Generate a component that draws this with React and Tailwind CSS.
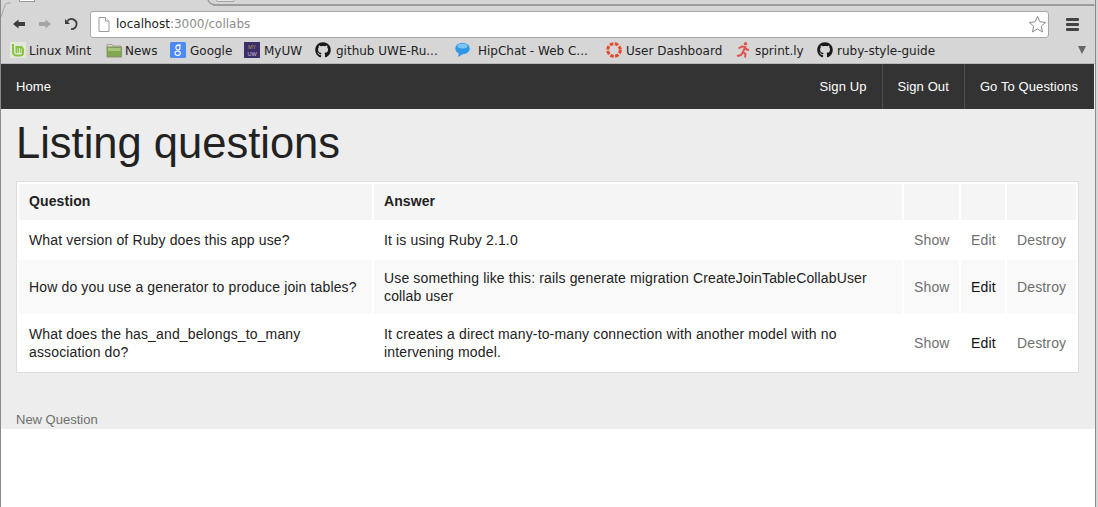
import React from "react";
import { FaGithub } from "react-icons/fa";

const sans = "font-['Liberation_Sans',Arial,sans-serif]";

function Mint() {
  return (
    <svg width="16" height="16" viewBox="0 0 16 16">
      <rect width="16" height="16" fill="#e3e8dc" />
      <path d="M3 2v8a3.500 3.500 0 0 0 3.500 3.500h4A2.500 2.500 0 0 0 13 11V7.500A2.500 2.500 0 0 0 10.500 5H6.500v6" fill="none" stroke="#86c440" strokeWidth="2" />
      <path d="M8.500 5.500v5M10.800 6v5" stroke="#86c440" strokeWidth="1.200" />
    </svg>
  );
}
function Folder() {
  return (
    <svg width="16" height="16" viewBox="0 0 16 16">
      <path d="M1 2.500h5l1 1.500h7.500v2H1z" fill="#d8d8cc" stroke="#8a8a78" strokeWidth="0.700" />
      <rect x="1" y="5" width="14.500" height="10" fill="#83a94e" stroke="#7d8a68" strokeWidth="0.800" />
      <rect x="2" y="6" width="12.500" height="3" fill="#a9c67e" />
    </svg>
  );
}
function GoogleIcon() {
  return (
    <svg width="16" height="16" viewBox="0 0 16 16">
      <rect width="16" height="16" rx="1.500" fill="#4c8bf5" />
      <ellipse cx="8" cy="5.500" rx="2.100" ry="2.400" fill="none" stroke="#fff" strokeWidth="1.100" />
      <ellipse cx="7.700" cy="11.200" rx="2.600" ry="2.200" fill="none" stroke="#fff" strokeWidth="1.100" />
      <path d="M8 3h3" stroke="#fff" strokeWidth="1" />
    </svg>
  );
}
function UW() {
  return (
    <svg width="16" height="16" viewBox="0 0 16 16">
      <rect width="16" height="16" fill="#3d2d69" />
      <text x="8" y="6.500" textAnchor="middle" fontSize="5.500" fill="#b09a5c" fontFamily="Liberation Sans">MY</text>
      <text x="8" y="13.500" textAnchor="middle" fontSize="5.500" fill="#c9c3d9" fontFamily="Liberation Sans">UW</text>
    </svg>
  );
}
function Hip() {
  return (
    <svg width="17" height="16" viewBox="0 0 17 16">
      <ellipse cx="9.500" cy="7.500" rx="7.500" ry="5.800" fill="#cfd4d8" />
      <path d="M12 11l4 4-1-5z" fill="#cfd4d8" />
      <ellipse cx="7.500" cy="6.500" rx="7.200" ry="5.800" fill="#2f97e8" />
      <path d="M4 10l-1 5 5-3z" fill="#2f97e8" />
      <ellipse cx="7.500" cy="4" rx="5" ry="2.500" fill="#7cc4f5" />
    </svg>
  );
}
function Dash() {
  return (
    <svg width="16" height="16" viewBox="0 0 16 16">
      <circle cx="8" cy="8" r="6.300" fill="none" stroke="#e8492c" strokeWidth="3" strokeDasharray="3.500 1.450" />
    </svg>
  );
}
function Runner() {
  return (
    <svg width="14" height="16" viewBox="0 0 14 16" fill="none" stroke="#e0534f" strokeWidth="2">
      <circle cx="9.500" cy="1.800" r="1.700" fill="#e0534f" stroke="none" />
      <path d="M2.500 6.500l3.500-2 3 .5-2 5 2.500 2-.5 3.500M7 10l-2 3-4 1M9 5l1.500 2.500 2.500.5" />
    </svg>
  );
}

const bookmarks = [
  { icon: <Mint />, label: "Linux Mint", w: "w-[96px]", pl: "pl-[19px]" },
  { icon: <Folder />, label: "News", w: "w-[64px]", pl: "pl-[19px]" },
  { icon: <GoogleIcon />, label: "Google", w: "w-[74px]", pl: "pl-[20px]" },
  { icon: <UW />, label: "MyUW", w: "w-[71px]", pl: "pl-[20px]" },
  { icon: <FaGithub size={16} color="#1a1a1a" />, label: "github UWE-Ru...", w: "w-[140px]", pl: "pl-[21px]" },
  { icon: <Hip />, label: "HipChat - Web C...", w: "w-[151px]", pl: "pl-[23px]" },
  { icon: <Dash />, label: "User Dashboard", w: "w-[130px]", pl: "pl-[20px]" },
  { icon: <Runner />, label: "sprint.ly", w: "w-[81px]", pl: "pl-[19px]" },
  { icon: <FaGithub size={16} color="#1a1a1a" />, label: "ruby-style-guide", w: "w-[130px]", pl: "pl-[20px]" },
];

function Bookmark({ b }) {
  return (
    <div className={`relative shrink-0 flex items-center h-[24px] ${b.w} ${b.pl}`}>
      <span className="absolute left-0 top-[4px] flex">{b.icon}</span>
      <span className="pt-[1px] text-[12px] leading-[16px] text-[#222] whitespace-nowrap">{b.label}</span>
    </div>
  );
}

function Chrome() {
  return (
    <div className="relative bg-[#d6d6d6] h-[64px] border-b border-[#b9b9b9] font-['DejaVu_Sans',sans-serif] flex flex-col">
      <svg width="240" height="20" viewBox="0 0 240 20" fill="none" className="absolute left-0 top-0">
        <path d="M0 17L4 5Q5 3 7 3H10" stroke="#a8a8a8" />
        <path d="M207 0Q209 4.500 213 4.500" stroke="#9c9c9c" strokeWidth="1.500" />
        <path d="M215.500 0v.5q0 1 1 1H232q1 0 1-1V0" stroke="#a5a5a5" fill="#e4e4e4" />
      </svg>
      <div className="h-[5px] shrink-0 flex">
        <div className="w-[212px] shrink-0 flex">
          <div className="ml-[18px] w-[16px] h-[2px] bg-white border border-t-0 border-[#999]" />
        </div>
        <div className="flex-1 mt-[4px] h-[2px] bg-[#9c9c9c] rounded-tr-[4px]" />
      </div>
      <div className="flex items-center h-[33px] shrink-0 pt-[5px] pl-[11px] pr-[16px]">
        <svg width="14" height="12" viewBox="0 0 14 12" className="shrink-0">
          <path d="M1 6l5.500-4.500V4H13v4H6.500v2.500z" fill="#3d3d3d" />
        </svg>
        <svg width="14" height="12" viewBox="0 0 14 12" className="shrink-0 ml-[12px]">
          <path d="M13 6L7.500 1.500V4H1v4h6.500v2.500z" fill="#a6a6a6" />
        </svg>
        <svg width="14" height="14" viewBox="0 0 14 14" className="shrink-0 ml-[12px]" fill="none">
          <path d="M3.200 4.500A5 5 0 1 1 7 12" stroke="#3d3d3d" strokeWidth="1.700" />
          <path d="M1 2v5h5z" fill="#3d3d3d" />
        </svg>
        <div className="ml-[12px] h-[27px] flex-1 flex items-center bg-white border border-[#a8a8a8] rounded-[3px] pl-[7px] pr-[1px]">
          <svg width="12" height="15" viewBox="0 0 12 15" fill="#fff" stroke="#9a9a9a" className="shrink-0">
            <path d="M1 .5h6.500L11 4v10.500H1z" />
            <path d="M7.500.5V4H11" />
          </svg>
          <span className="ml-[6px] text-[12px] text-[#222]">localhost</span>
          <span className="text-[12px] text-[#8c8c8c]">:3000/collabs</span>
          <svg width="19" height="19" viewBox="0 0 19 19" fill="#fff" stroke="#8a8a8a" className="ml-auto shrink-0">
            <path d="M9.500 1.500l2.400 5.300 5.700.6-4.300 3.800 1.200 5.700-5-2.900-5 2.900 1.200-5.700L1.400 7.400l5.700-.6z" />
          </svg>
        </div>
        <div className="ml-[17px] w-[13px] shrink-0 flex flex-col gap-[2px]">
          <div className="h-[3px] bg-[#444] rounded-[1px]" />
          <div className="h-[3px] bg-[#444] rounded-[1px]" />
          <div className="h-[3px] bg-[#444] rounded-[1px]" />
        </div>
      </div>
      <div className="flex items-center pl-[9px] h-[24px]">
        {bookmarks.map((b) => (
          <Bookmark key={b.label} b={b} />
        ))}
        <svg width="10" height="8" viewBox="0 0 10 8" className="ml-[130px] shrink-0">
          <path d="M1 0h8L5 8z" fill="#666" />
        </svg>
      </div>
    </div>
  );
}

function Nav() {
  const right = ["Sign Up", "Sign Out", "Go To Questions"];
  return (
    <nav className="bg-[#333] h-[45px] mr-[1px] flex items-stretch justify-between text-white text-[13px] tracking-[0.1px]">
      <a className="flex items-center px-[15px]">Home</a>
      <div className="flex items-stretch pr-[1px]">
        {right.map((t, i) => (
          <a
            key={t}
            className={`flex items-center px-[15px] ${i > 0 ? "border-l border-[#4d4d4d]" : ""}`}
          >
            {t}
          </a>
        ))}
      </div>
    </nav>
  );
}

const linkGray = "text-[#6f6f6f]";
const rows = [
  { q: "What version of Ruby does this app use?", a: "It is using Ruby 2.1.0", edit: linkGray },
  {
    q: "How do you use a generator to produce join tables?",
    a: "Use something like this: rails generate migration CreateJoinTableCollabUser collab user",
    edit: "text-[#111]",
    bg: "bg-[#f9f9f9]",
  },
  {
    q: "What does the has_and_belongs_to_many association do?",
    a: "It creates a direct many-to-many connection with another model with no intervening model.",
    edit: "text-[#111]",
  },
];

function Table() {
  const td = "px-[10px] py-[9px] text-[14px] leading-[18px] tracking-[0.14px] align-middle";
  const th = "px-[10px] pt-[8px] pb-[10px] text-[14px] leading-[18px] tracking-[0.1px] font-bold text-left text-[#222] bg-[#f5f5f5]";
  return (
    <table className="border-separate border-spacing-[2px] table-fixed bg-white border border-[#ddd] w-[1063px] text-[#222]">
      <colgroup>
        <col className="w-[353px]" />
        <col className="w-[528px]" />
        <col className="w-[55px]" />
        <col className="w-[44px]" />
        <col className="w-[69px]" />
      </colgroup>
      <thead>
        <tr>
          <th className={th}>Question</th>
          <th className={th}>Answer</th>
          <th className={th}></th>
          <th className={th}></th>
          <th className={th}></th>
        </tr>
      </thead>
      <tbody>
        {rows.map((r) => (
          <tr key={r.q} className={r.bg || ""}>
            <td className={td}>{r.q}</td>
            <td className={td}>{r.a}</td>
            <td className={`${td} ${linkGray} text-center`}>Show</td>
            <td className={`${td} ${r.edit} text-center`}>Edit</td>
            <td className={`${td} ${linkGray} text-center`}>Destroy</td>
          </tr>
        ))}
      </tbody>
    </table>
  );
}

export default function App() {
  return (
    <div className={`${sans} flex h-[507px] w-[1098px] bg-white border-l border-[#8a8a8a] overflow-hidden`}>
      <div className="flex-1 min-w-0 flex flex-col">
        <Chrome />
        <div className="bg-[#ededed]">
          <Nav />
        </div>
        <main className="bg-[#ededed] h-[320px] pl-[15px] flex flex-col">
          <h1 className="text-[43.500px] leading-[48px] font-normal text-[#222] mt-[10px] mb-[14px]">Listing questions</h1>
          <Table />
          <a className={`mt-[39px] text-[13px] leading-[16px] ${linkGray}`}>New Question</a>
        </main>
      </div>
      <div className="w-[1px] shrink-0 bg-[#8a8a8a]" />
      <div className="w-[2px] shrink-0 bg-[#d6d6d6]" />
    </div>
  );
}
